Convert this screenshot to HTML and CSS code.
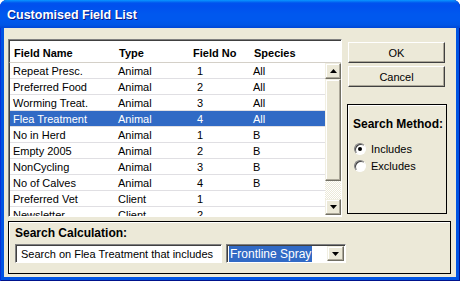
FILE: index.html
```html
<!DOCTYPE html>
<html>
<head>
<meta charset="utf-8">
<link rel="stylesheet" href="styles.css">
</head>
<body>
<div class="window">
  <div class="titlebar"><span class="title">Customised Field List</span></div>
  <div class="client">
    <div class="top">
      <div class="list">
        <div class="grid header">
          <div class="c">Field Name</div><div class="c">Type</div><div class="c">Field No</div><div class="c">Species</div>
        </div>
        <div class="body">
          <div class="rows">
            <div class="grid row"><div class="c">Repeat Presc.</div><div class="c">Animal</div><div class="c num">1</div><div class="c">All</div></div>
            <div class="grid row"><div class="c">Preferred Food</div><div class="c">Animal</div><div class="c num">2</div><div class="c">All</div></div>
            <div class="grid row"><div class="c">Worming Treat.</div><div class="c">Animal</div><div class="c num">3</div><div class="c">All</div></div>
            <div class="grid row sel"><div class="c">Flea Treatment</div><div class="c">Animal</div><div class="c num">4</div><div class="c">All</div></div>
            <div class="grid row"><div class="c">No in Herd</div><div class="c">Animal</div><div class="c num">1</div><div class="c">B</div></div>
            <div class="grid row"><div class="c">Empty 2005</div><div class="c">Animal</div><div class="c num">2</div><div class="c">B</div></div>
            <div class="grid row"><div class="c">NonCycling</div><div class="c">Animal</div><div class="c num">3</div><div class="c">B</div></div>
            <div class="grid row"><div class="c">No of Calves</div><div class="c">Animal</div><div class="c num">4</div><div class="c">B</div></div>
            <div class="grid row"><div class="c">Preferred Vet</div><div class="c">Client</div><div class="c num">1</div><div class="c"></div></div>
            <div class="grid row"><div class="c">Newsletter</div><div class="c">Client</div><div class="c num">2</div><div class="c"></div></div>
          </div>
          <div class="scrollbar">
            <div class="sbtn"><svg width="7" height="4" viewBox="0 0 7 4"><path d="M3.5 0 L7 4 L0 4 Z" fill="#000"/></svg></div>
            <div class="thumb"></div>
            <div class="track"></div>
            <div class="sbtn"><svg width="7" height="4" viewBox="0 0 7 4"><path d="M0 0 L7 0 L3.5 4 Z" fill="#000"/></svg></div>
          </div>
        </div>
      </div>
      <div class="side">
        <div class="btn">OK</div>
        <div class="btn">Cancel</div>
        <div class="method">
          <div class="mtitle">Search Method:</div>
          <div class="radio"><span class="rb on"></span>Includes</div>
          <div class="radio"><span class="rb"></span>Excludes</div>
        </div>
      </div>
    </div>
    <div class="calc">
      <div class="ctitle">Search Calculation:</div>
      <div class="crow">
        <div class="edit">Search on Flea Treatment that includes</div>
        <div class="combo"><span class="ctext"><span class="hl">Frontline Spray</span></span><span class="cbtn"><svg width="7" height="4" viewBox="0 0 7 4"><path d="M0 0 L7 0 L3.5 4 Z" fill="#000"/></svg></span></div>
      </div>
    </div>
  </div>
</div>
</body>
</html>
```
FILE: styles.css
```css
* { box-sizing: border-box; }
html, body { margin: 0; padding: 0; background: #fff; }
body { font-family: "Liberation Sans", Arial, sans-serif; font-size: 11px; color: #000; }

.window {
  width: 460px; height: 281px;
  background: #0054e3;
  display: flex; flex-direction: column;
  border-radius: 7px 7px 0 0;
  padding: 0 4px 4px 4px;
  box-shadow: inset -1px 0 0 #00138c, inset 1px 0 0 #0831d9, inset 0 -1px 0 #00138c;
}
.titlebar {
  height: 28px; flex: none;
  margin: 0 -4px;
  padding-left: 7px;
  display: flex; align-items: center;
  border-radius: 7px 7px 0 0;
  background: linear-gradient(to bottom, #0997ff 0px, #0053ee 3px, #0050ee 6px, #0058ee 14px, #0058ee 20px, #0055e5 25px, #0046d6 28px);
}
.title {
  color: #fff; font-weight: bold; font-size: 12.5px;
  text-shadow: 1px 1px 0 #0a1883;
  padding-top: 1px;
}
.client {
  flex: 1; background: #ece9d8;
  padding: 11px 6px 3px 4px;
  display: flex; flex-direction: column;
}
.top { display: flex; }
.list {
  width: 334px; height: 178px;
  border-style: solid; border-width: 1px;
  border-color: #808080 #fff #fff #808080;
  background: #fff;
  display: flex; flex-direction: column;
}
.list > .header {
  border-top: 1px solid #404040;
  border-left: 1px solid #404040;
}
.grid {
  display: grid;
  grid-template-columns: 105px 74px 61px 1fr;
}
.header {
  height: 23px; flex: none;
  font-weight: bold; font-size: 11px;
  border-bottom: 1px solid #d4d0c8;
  align-items: center;
  padding-left: 1px;
}
.header .c { padding-left: 3px; padding-top: 2px; }
.body {
  flex: 1; display: flex; overflow: hidden;
  border-left: 1px solid #404040;
}
.rows { flex: 1; overflow: hidden; }
.row {
  height: 16px; border-bottom: 1px solid #e0dfe3;
  align-items: center;
  white-space: nowrap;
}
.row .c { padding-left: 3px; }
.row .num { padding-left: 8px; }
.row.sel { background: #316ac5; color: #fff; }
.scrollbar {
  width: 16px; flex: none;
  display: flex; flex-direction: column;
}
.sbtn, .thumb {
  background: #ece9d8;
  border-style: solid; border-width: 1px;
  border-color: #f1efe2 #716f64 #716f64 #f1efe2;
  box-shadow: inset -1px -1px 0 #aca899, inset 1px 1px 0 #fff;
}
.sbtn { height: 16px; display: flex; align-items: center; justify-content: center; }
.thumb { height: 102px; }
.track {
  height: 18px;
  background-color: #fff;
  background-image: repeating-conic-gradient(#ece9d8 0 25%, #fff 0 50%);
  background-size: 2px 2px;
}
.side {
  margin-left: 6px;
  display: flex; flex-direction: column;
  padding-top: 3px;
}
.btn {
  width: 97px; height: 21px;
  margin-bottom: 3px;
  display: flex; align-items: center; justify-content: center;
  background: #ece9d8;
  border-style: solid; border-width: 1px;
  border-color: #fff #404040 #404040 #fff;
  box-shadow: inset -1px -1px 0 #aca899;
}
.method {
  margin-top: 14px; margin-left: -1px;
  width: 100px; height: 110px;
  border: 1px solid #000;
  box-shadow: inset 1px 1px 0 #fff;
  padding: 12px 0 0 5px;
}
.mtitle { font-weight: bold; font-size: 12px; margin-bottom: 9px; }
.radio { display: flex; align-items: center; height: 17px; padding-left: 1px; }
.rb {
  width: 12px; height: 12px; border-radius: 50%;
  background: #fff; margin-right: 5px;
  border: 1px solid; border-color: #808080 #fff #fff #808080;
  box-shadow: inset 1px 1px 0 #404040;
  display: flex; align-items: center; justify-content: center;
}
.rb.on::after {
  content: ""; width: 4px; height: 4px; border-radius: 50%; background: #000;
}
.calc {
  margin-top: 4px;
  width: 443px; height: 53px;
  border: 1px solid #000;
  box-shadow: inset 1px 1px 0 #fff;
  padding: 4px 0 0 6px;
}
.ctitle { font-weight: bold; font-size: 12px; height: 17px; line-height: 15px; }
.crow { display: flex; margin-top: 1px; }
.edit, .combo {
  height: 19px; background: #fff;
  border-style: solid; border-width: 1px;
  border-color: #808080 #fff #fff #808080;
  box-shadow: inset 1px 1px 0 #404040;
  display: flex; align-items: center;
  white-space: nowrap;
}
.edit { width: 207px; padding-left: 5px; font-size: 11px; }
.combo { width: 120px; margin-left: 4px; padding-left: 2px; justify-content: space-between; }
.hl { background: #316ac5; color: #fff; padding: 1px 1px; font-size: 12px; }
.cbtn {
  width: 17px; height: 15px; margin-right: 1px;
  background: #ece9d8;
  border: 1px solid; border-color: #f1efe2 #716f64 #716f64 #f1efe2;
  box-shadow: inset -1px -1px 0 #aca899, inset 1px 1px 0 #fff;
  display: flex; align-items: center; justify-content: center;
}
```
